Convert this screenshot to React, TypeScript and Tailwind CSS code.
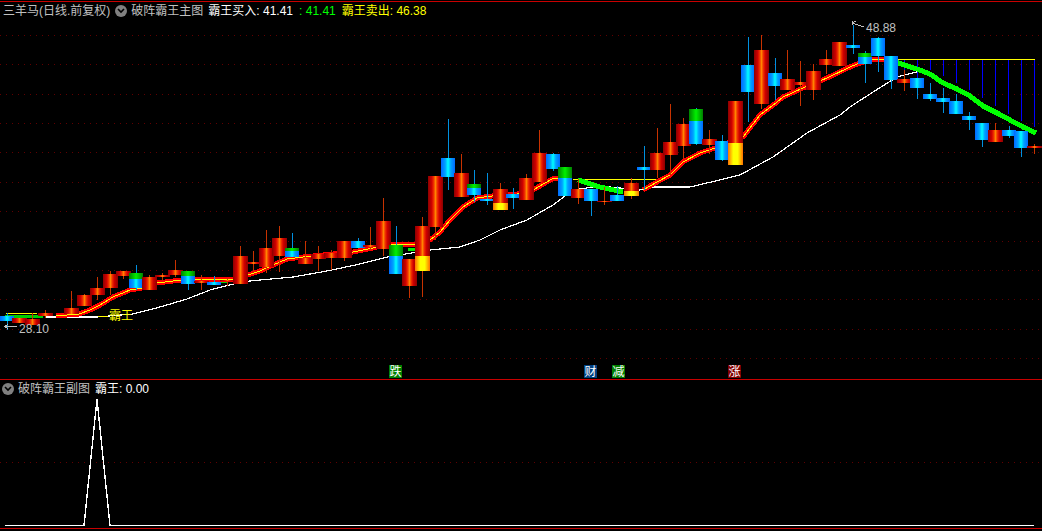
type Kind = 'r' | 'b' | 'gb' | 'ry';
// x, body top, body bottom, wick top, wick bottom, kind, split y
type Candle = [number, number, number, number, number, Kind, number?];

const candles: Candle[] = [
  [7, 316, 321, 313, 330, 'b'],
  [19, 318, 323, 318, 323, 'r'],
  [32, 319, 325, 313, 325, 'r'],
  [45, 313, 316, 310, 318, 'r'],
  [71, 308, 314, 291, 314, 'r'],
  [84, 295, 306, 294, 306, 'r'],
  [97, 288, 295, 277, 300, 'r'],
  [110, 274, 288, 271, 295, 'r'],
  [123, 271, 276, 271, 279, 'r'],
  [136, 273, 288, 265, 290, 'gb', 279],
  [149, 277, 290, 275, 290, 'r'],
  [162, 275, 277, 273, 281, 'r'],
  [175, 270, 275, 260, 277, 'r'],
  [188, 271, 284, 271, 290, 'gb', 276],
  [201, 281, 283, 275, 290, 'r'],
  [214, 282, 285, 276, 285, 'b'],
  [227, 280, 281, 278, 286, 'r'],
  [240, 256, 284, 246, 284, 'r'],
  [253, 262, 264, 251, 273, 'r'],
  [266, 248, 267, 230, 273, 'r'],
  [279, 238, 256, 226, 272, 'r'],
  [292, 248, 257, 233, 257, 'gb', 251],
  [305, 258, 264, 241, 264, 'r'],
  [318, 254, 259, 246, 271, 'r'],
  [331, 253, 258, 250, 270, 'r'],
  [344, 241, 258, 241, 261, 'r'],
  [358, 241, 248, 238, 248, 'b'],
  [370, 245, 247, 227, 250, 'r'],
  [383, 221, 249, 198, 256, 'r'],
  [396, 245, 274, 226, 274, 'gb', 256],
  [409, 259, 286, 259, 298, 'r'],
  [422, 226, 271, 217, 297, 'ry', 256],
  [435, 176, 227, 176, 240, 'r'],
  [448, 158, 177, 119, 190, 'b'],
  [461, 173, 197, 154, 197, 'r'],
  [474, 184, 195, 170, 202, 'gb', 188],
  [487, 199, 201, 173, 205, 'b'],
  [500, 189, 210, 183, 210, 'ry', 203],
  [513, 194, 198, 188, 209, 'b'],
  [526, 178, 200, 174, 200, 'r'],
  [539, 153, 182, 130, 182, 'r'],
  [553, 154, 169, 153, 171, 'b'],
  [565, 167, 196, 167, 196, 'gb', 178],
  [578, 189, 198, 179, 204, 'r'],
  [591, 189, 201, 189, 216, 'b'],
  [604, 201, 202, 187, 205, 'r'],
  [617, 195, 201, 186, 201, 'b'],
  [631, 183, 196, 178, 199, 'ry', 191],
  [644, 167, 170, 146, 190, 'b'],
  [657, 153, 170, 128, 178, 'r'],
  [670, 142, 155, 104, 175, 'r'],
  [683, 124, 146, 118, 159, 'r'],
  [696, 109, 144, 108, 145, 'gb', 121],
  [709, 139, 145, 130, 154, 'r'],
  [722, 141, 160, 135, 161, 'b'],
  [735, 101, 165, 101, 165, 'ry', 143],
  [748, 65, 92, 37, 122, 'b'],
  [761, 50, 104, 35, 109, 'r'],
  [775, 73, 86, 58, 100, 'b'],
  [787, 79, 90, 50, 90, 'r'],
  [800, 82, 85, 61, 106, 'r'],
  [813, 71, 90, 64, 100, 'r'],
  [826, 59, 65, 50, 74, 'r'],
  [839, 42, 66, 42, 66, 'r'],
  [853, 45, 48, 25, 54, 'b'],
  [865, 53, 64, 51, 83, 'gb', 57],
  [878, 38, 56, 37, 72, 'b'],
  [891, 56, 80, 56, 89, 'b'],
  [904, 79, 83, 70, 91, 'r'],
  [917, 78, 88, 78, 99, 'b'],
  [930, 94, 99, 83, 101, 'b'],
  [943, 98, 102, 88, 113, 'b'],
  [956, 101, 114, 94, 114, 'b'],
  [969, 116, 120, 112, 130, 'b'],
  [982, 123, 140, 123, 147, 'b'],
  [995, 130, 142, 123, 142, 'r'],
  [1009, 130, 136, 126, 138, 'b'],
  [1021, 131, 148, 131, 157, 'b'],
  [1034, 146, 148, 144, 154, 'r'],
];

const blueBars: [number, number][] = [
  [904, 70], [917, 78], [930, 70], [943, 76], [956, 83], [969, 90], [982, 98], [995, 106], [1008, 114], [1021, 121], [1034, 127],
];

const gridTop = [35, 64, 94, 123, 152, 182, 211, 241, 270, 299, 329, 358];

const maRed =
  '56,316 79,314 90,310 100,305 113,297 130,290 142,288 157,283 173,281 197,279 227,280 233,279 248,275 260,271 273,265 287,259 303,257 323,255 353,252 373,248 390,244 412,245 430,240 440,232 450,220 463,207 477,198 492,196 517,194 533,190 552,179 566,178';
const maRed2 = '643,190 657,182 670,175 683,162 700,153 715,148 743,137 760,115 777,102 783,97 803,88 827,78 850,67 857,64 873,59 890,59';
const maGreen = '578,180 600,187 623,192';
const maGreen2 = '895,62 917,69 930,74 943,83 957,89 970,96 983,106 997,113 1010,120 1023,127 1036,133';
const whiteLine =
  '46,317 97,317 133,314 160,307 187,299 210,290 233,284 250,281 260,280 293,277 327,271 360,264 387,257 430,250 460,247 480,240 500,230 527,220 553,205 573,190 600,186 640,190 647,187 690,187 707,183 740,175 773,157 807,133 840,115 850,107 873,92 897,77 917,72';

const fills: Record<'r' | 'b' | 'g' | 'y', string> = {
  r: 'url(#candleRed)',
  b: 'url(#candleBlue)',
  g: 'url(#candleGreen)',
  y: 'url(#candleYellow)',
};

function CandleMark({ c }: { c: Candle }) {
  const [x, top, bottom, wickTop, wickBottom, kind, split] = c;
  const isRed = kind === 'r' || kind === 'ry';
  const w = isRed ? 15 : 14;
  const left = x - 7;
  return (
    <g>
      <rect x={x} y={wickTop} width={1} height={wickBottom - wickTop} fill={isRed ? '#c83200' : '#0090e0'} />
      {kind === 'gb' && split ? (
        <>
          <rect x={left} y={top} width={w} height={split - top} fill={fills.g} />
          <rect x={left} y={split} width={w} height={bottom - split} fill={fills.b} />
        </>
      ) : kind === 'ry' && split ? (
        <>
          <rect x={left} y={top} width={w} height={split - top} fill={fills.r} />
          <rect x={left} y={split} width={w} height={bottom - split} fill={fills.y} />
        </>
      ) : (
        <rect x={left} y={top} width={w} height={bottom - top} fill={isRed ? fills.r : fills.b} />
      )}
    </g>
  );
}

function MainChart() {
  return (
    <svg width={1042} height={379} shapeRendering="crispEdges" className="block">
      <defs>
        <linearGradient id="candleRed">
          <stop offset="0" stopColor="#8c0000" />
          <stop offset="0.25" stopColor="#d00000" />
          <stop offset="0.38" stopColor="#f03000" />
          <stop offset="0.5" stopColor="#ff8400" />
          <stop offset="0.62" stopColor="#f03000" />
          <stop offset="0.75" stopColor="#d00000" />
          <stop offset="1" stopColor="#8c0000" />
        </linearGradient>
        <linearGradient id="candleBlue">
          <stop offset="0" stopColor="#0068ff" />
          <stop offset="0.3" stopColor="#00a0ff" />
          <stop offset="0.5" stopColor="#00ffff" />
          <stop offset="0.7" stopColor="#00a0ff" />
          <stop offset="1" stopColor="#0068ff" />
        </linearGradient>
        <linearGradient id="candleGreen">
          <stop offset="0" stopColor="#008000" />
          <stop offset="0.5" stopColor="#00f000" />
          <stop offset="1" stopColor="#008000" />
        </linearGradient>
        <linearGradient id="candleYellow">
          <stop offset="0" stopColor="#ff7000" />
          <stop offset="0.35" stopColor="#ffff00" />
          <stop offset="0.65" stopColor="#ffff00" />
          <stop offset="1" stopColor="#ff7000" />
        </linearGradient>
      </defs>
      <rect x={0} y={1} width={1042} height={1} fill="#c80000" />
      {gridTop.map((y) => (
        <line key={y} x1={0} x2={1042} y1={y + 0.5} y2={y + 0.5} stroke="#600000" strokeDasharray="1 5" />
      ))}
      {blueBars.map(([x, y]) => (
        <rect key={x} x={x} y={59} width={1} height={y - 59} fill="#0000ff" />
      ))}
      <polyline points="573,179.5 660,179.5 672,175" fill="none" stroke="#ffff00" />
      <rect x={895} y={59} width={140} height={1} fill="#ffff00" />
      <rect x={6} y={313} width={31} height={1} fill="#ffff00" />
      <rect x={5} y={315} width={38} height={3} fill="#00d000" />
      <rect x={200} y={279} width={32} height={1} fill="#ffff00" />
      <rect x={210} y={280} width={17} height={3} fill="#00d000" />
      <rect x={404} y={245} width={14} height={1} fill="#ffff00" />
      <rect x={408} y={248} width={7} height={3} fill="#00f000" />
      <rect x={56} y={314} width={16} height={4} fill="#ff0000" />
      <polyline points={whiteLine} fill="none" stroke="#ffffff" strokeWidth={1.2} />
      <polyline points={maRed} fill="none" stroke="#ff0000" strokeWidth={5} />
      <polyline points={maRed} fill="none" stroke="#ffff00" strokeWidth={1} />
      <polyline points={maRed2} fill="none" stroke="#ff0000" strokeWidth={5} />
      <polyline points={maRed2} fill="none" stroke="#ffff00" strokeWidth={1} />
      <polyline points={maGreen} fill="none" stroke="#00ff00" strokeWidth={5} />
      <polyline points={maGreen2} fill="none" stroke="#00ff00" strokeWidth={5} />
      {candles.map((c) => (
        <CandleMark key={c[0]} c={c} />
      ))}
      <polyline points="98,316.5 108,316.5" stroke="#ffff00" fill="none" />
      <polyline points="8,324 5,326.5 8,329" stroke="#c0c0c0" fill="none" />
      <line x1={5} x2={17} y1={326.5} y2={326.5} stroke="#c0c0c0" />
      <polyline points="856,21 852,23 864,27" stroke="#c0c0c0" fill="none" />
      <polyline points="852,21 852,25" stroke="#c0c0c0" fill="none" />
    </svg>
  );
}

function SubChart() {
  return (
    <svg width={1042} height={148} shapeRendering="crispEdges" className="block">
      <line x1={0} x2={1042} y1={82.5} y2={82.5} stroke="#600000" strokeDasharray="1 5" />
      <polyline points="5,145.5 84,145.5 97,19 110,145.5 1034,145.5" fill="none" stroke="#ffffff" strokeWidth={1.4} />
    </svg>
  );
}

function CollapseDot() {
  return (
    <span className="flex h-3 w-3 shrink-0 items-center justify-center rounded-full bg-[#808080]">
      <svg width={8} height={6} viewBox="0 0 8 6">
        <polyline points="1,1 4,4 7,1" fill="none" stroke="#000000" strokeWidth={1.6} />
      </svg>
    </span>
  );
}

function Marker({ label, className }: { label: string; className: string }) {
  return (
    <span className={`absolute top-[365px] flex h-[13px] w-[13px] items-center justify-center text-[12px] leading-none text-white ${className}`}>
      {label}
    </span>
  );
}

export default function App() {
  return (
    <div className="h-[531px] w-[1042px] overflow-hidden bg-black font-['Liberation_Sans','Noto_Sans_CJK_SC',sans-serif] text-[12px] leading-none">
      <div className="relative h-[380px] border-b border-[#c80000]">
        <MainChart />
        <div className="absolute left-[3px] top-[5px] flex items-center gap-[5px] whitespace-nowrap">
          <span className="text-[#c0c0c0]">三羊马(日线.前复权)</span>
          <CollapseDot />
          <span className="-ml-px text-[#c0c0c0]">破阵霸王主图</span>
          <span className="text-white">霸王买入: 41.41</span>
          <span className="ml-px text-[#00ff00]">: 41.41</span>
          <span className="ml-px text-[#ffff00]">霸王卖出: 46.38</span>
        </div>
        <span className="absolute left-[109px] top-[310px] text-[#ffff00]">霸王</span>
        <span className="absolute left-[19px] top-[323px] text-[#c0c0c0]">28.10</span>
        <span className="absolute left-[866px] top-[22px] text-[#c0c0c0]">48.88</span>
        <Marker label="跌" className="left-[389px] bg-[#008000]" />
        <Marker label="财" className="left-[584px] bg-[#004080]" />
        <Marker label="减" className="left-[612px] bg-[#008000]" />
        <Marker label="涨" className="left-[728px] bg-[#800000]" />
      </div>
      <div className="relative border-b border-[#c80000]">
        <SubChart />
        <div className="absolute left-[2px] top-[3px] flex items-center gap-1 whitespace-nowrap">
          <CollapseDot />
          <span className="text-[#c0c0c0]">破阵霸王副图</span>
          <span className="ml-px text-white">霸王: 0.00</span>
        </div>
      </div>
    </div>
  );
}
